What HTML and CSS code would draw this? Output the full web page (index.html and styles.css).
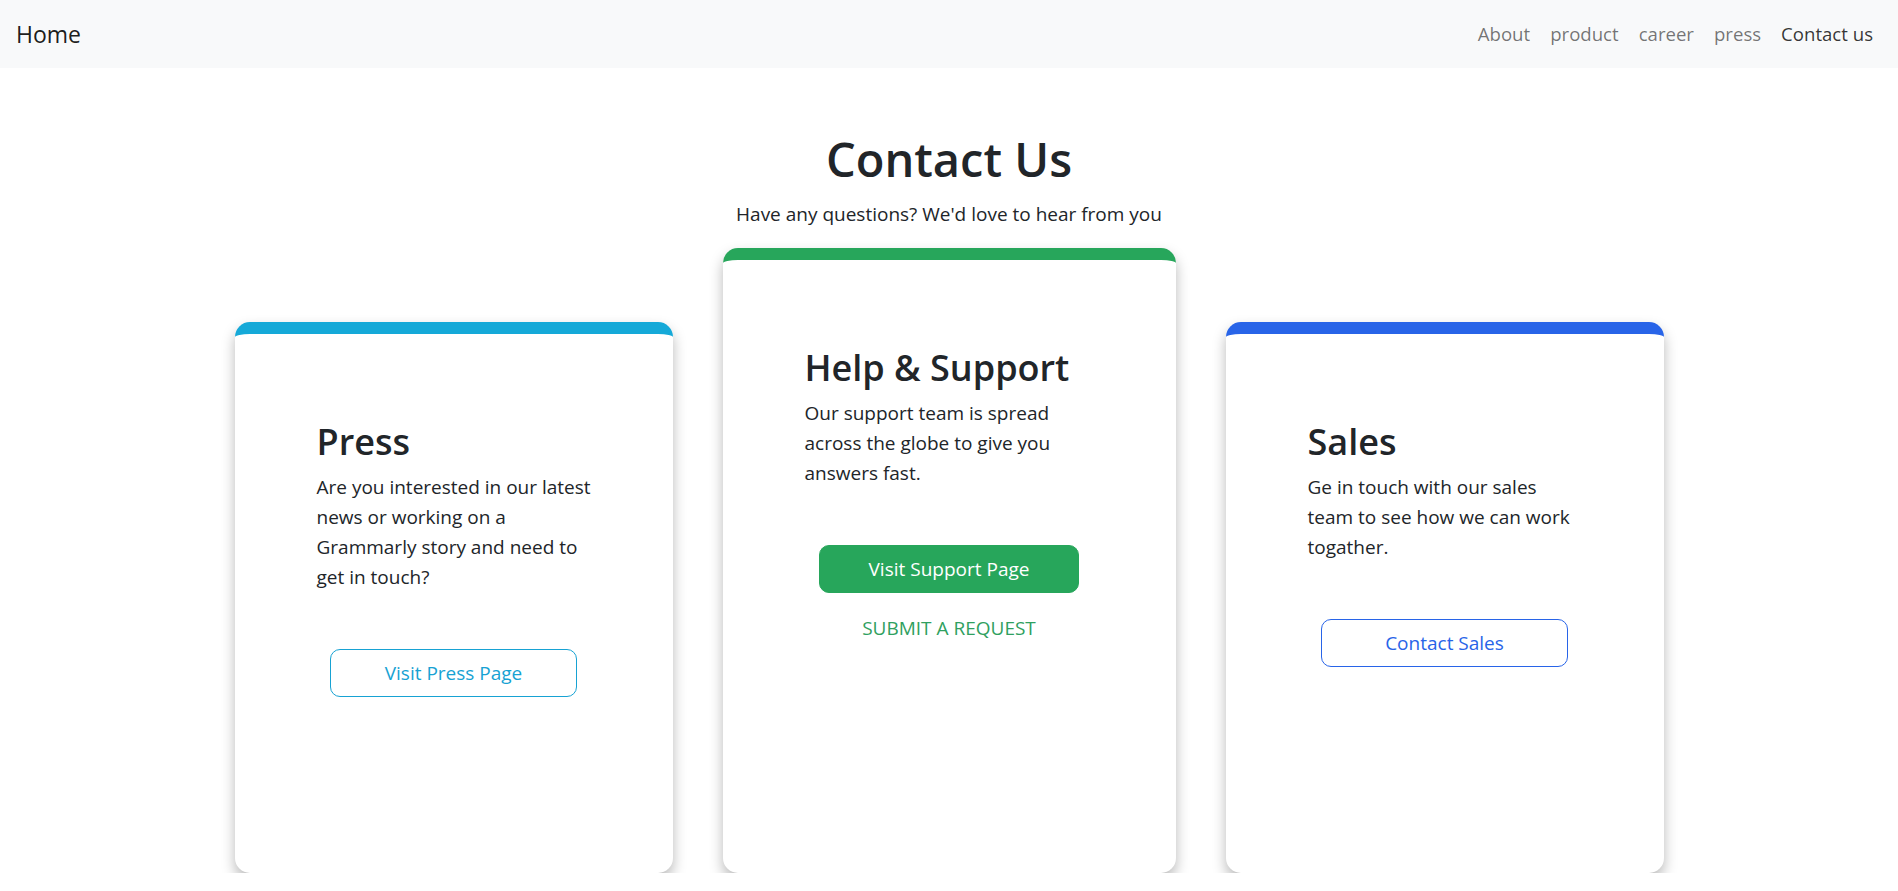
FILE: index.html
```html
<!DOCTYPE html>
<html lang="en">
<head>
<meta charset="utf-8">
<title>Contact Us</title>
<link rel="stylesheet" href="styles.css">
</head>
<body>
<nav class="navbar">
  <a class="brand" href="#">Home</a>
  <ul class="nav-links">
    <li><a class="nav-link" href="#">About</a></li>
    <li><a class="nav-link" href="#">product</a></li>
    <li><a class="nav-link" href="#">career</a></li>
    <li><a class="nav-link" href="#">press</a></li>
    <li><a class="nav-link active" href="#">Contact us</a></li>
  </ul>
</nav>
<main class="page">
  <header class="intro">
    <h1 class="title">Contact Us</h1>
    <p class="subtitle">Have any questions? We'd love to hear from you</p>
  </header>
  <section class="cards">
    <article class="card card-side card-info">
      <h2 class="card-title">Press</h2>
      <p class="card-text">Are you interested in our latest news or working on a Grammarly story and need to get in touch?</p>
      <a class="btn btn-outline-info" href="#">Visit Press Page</a>
    </article>
    <article class="card card-main card-success">
      <h2 class="card-title">Help &amp; Support</h2>
      <p class="card-text">Our support team is spread across the globe to give you answers fast.</p>
      <a class="btn btn-success" href="#">Visit Support Page</a>
      <a class="link-request" href="#">SUBMIT A REQUEST</a>
    </article>
    <article class="card card-side card-primary">
      <h2 class="card-title">Sales</h2>
      <p class="card-text">Ge in touch with our sales team to see how we can work togather.</p>
      <a class="btn btn-outline-primary" href="#">Contact Sales</a>
    </article>
  </section>
</main>
</body>
</html>
```

FILE: styles.css
```css
* { box-sizing: border-box; }

body {
  margin: 0;
  font-family: "Open Sans", "Noto Sans", "DejaVu Sans", sans-serif;
  font-size: 19px;
  line-height: 30px;
  color: #212529;
  background: #fff;
}

a { text-decoration: none; }

.navbar {
  height: 68px;
  background: #f8f9fa;
  display: flex;
  align-items: center;
  justify-content: space-between;
  padding: 0 15px 0 16px;
}

.brand {
  font-size: 23px;
  color: rgba(0, 0, 0, 0.9);
  line-height: 36px;
}

.nav-links {
  list-style: none;
  margin: 0;
  padding: 0;
  display: flex;
}

.nav-link {
  display: block;
  padding: 0 10px;
  font-size: 18.6px;
  color: rgba(0, 0, 0, 0.55);
}

.nav-link.active { color: rgba(0, 0, 0, 0.8); }

.intro {
  text-align: center;
  padding-top: 61px;
}

.title {
  margin: 0;
  font-size: 47px;
  line-height: 60px;
  font-weight: 600;
}

.subtitle {
  margin: 10px 0 0;
}

.cards {
  display: flex;
  justify-content: center;
  gap: 50px;
  margin-top: 19px;
}

.card {
  background: #fff;
  border-top: 12px solid;
  border-radius: 15px;
  box-shadow: 0 7px 14px rgba(0, 0, 0, 0.28);
  padding: 84px 82px 0;
  display: flex;
  flex-direction: column;
}

.card-side {
  width: 438px;
  height: 551px;
  margin-top: 74px;
}

.card-main {
  width: 453px;
  height: 625px;
}

.card-info { border-top-color: #15a9d8; }
.card-success { border-top-color: #27a65b; }
.card-primary { border-top-color: #2864e8; }

.card-title {
  margin: 0 0 6px;
  font-size: 36px;
  line-height: 48px;
  font-weight: 600;
}

.card-text {
  margin: 0 -5px 57px 0;
}

.btn {
  display: flex;
  align-items: center;
  justify-content: center;
  align-self: center;
  width: 90%;
  height: 48px;
  border-radius: 10px;
  border: 1px solid;
  font-size: 19px;
}

.btn-outline-info { color: #17a2d3; border-color: #17a2d3; }
.btn-outline-primary { color: #2864e8; border-color: #2864e8; }
.btn-success { color: #fff; background: #27a65b; border-color: #27a65b; }

.link-request {
  align-self: center;
  margin-top: 20px;
  color: #2fa060;
  font-size: 19px;
}
```
